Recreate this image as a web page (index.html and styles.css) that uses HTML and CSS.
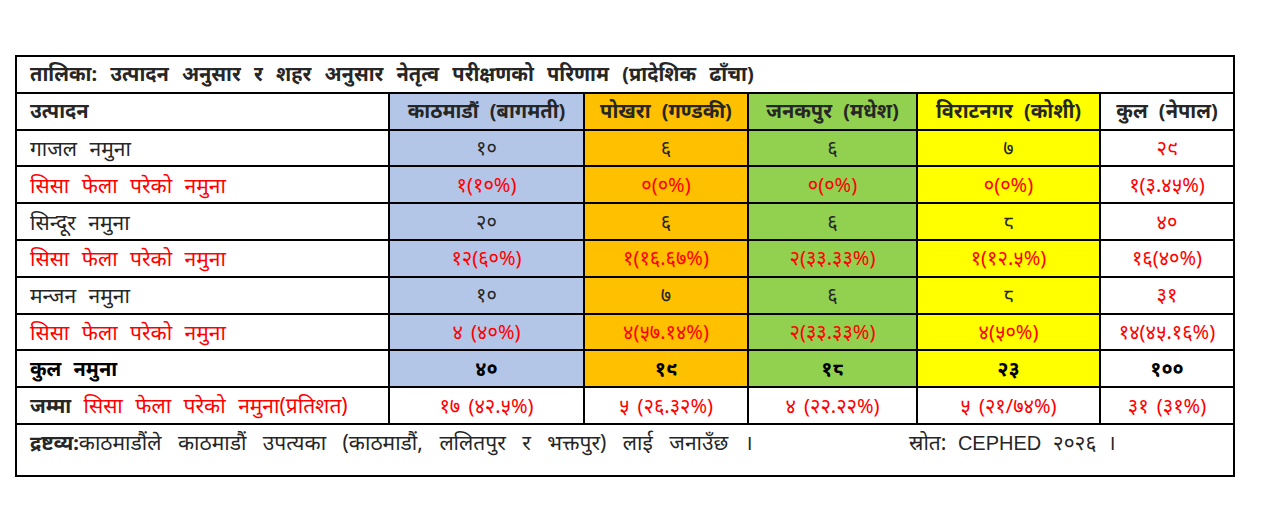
FILE: index.html
```html
<!DOCTYPE html>
<html lang="ne">
<head>
<meta charset="utf-8">
<title>तालिका</title>
<link rel="stylesheet" href="styles.css">
</head>
<body>
<table class="tbl">
  <colgroup>
    <col class="c1"><col class="c2"><col class="c3"><col class="c4"><col class="c5"><col class="c6">
  </colgroup>
  <tr class="title-row"><td colspan="6" class="title">तालिका: उत्पादन अनुसार र शहर अनुसार नेतृत्व परीक्षणको परिणाम (प्रादेशिक ढाँचा)</td></tr>
  <tr class="head">
    <td class="lbl">उत्पादन</td>
    <td class="blue">काठमाडौं (बागमती)</td>
    <td class="orange">पोखरा (गण्डकी)</td>
    <td class="green">जनकपुर (मधेश)</td>
    <td class="yellow">विराटनगर (कोशी)</td>
    <td>कुल (नेपाल)</td>
  </tr>
  <tr class="num">
    <td class="lbl">गाजल नमुना</td>
    <td class="blue">१०</td><td class="orange">६</td><td class="green">६</td><td class="yellow">७</td><td class="red">२९</td>
  </tr>
  <tr class="num red">
    <td class="lbl">सिसा फेला परेको नमुना</td>
    <td class="blue">१(१०%)</td><td class="orange">०(०%)</td><td class="green">०(०%)</td><td class="yellow">०(०%)</td><td>१(३.४५%)</td>
  </tr>
  <tr class="num">
    <td class="lbl">सिन्दूर नमुना</td>
    <td class="blue">२०</td><td class="orange">६</td><td class="green">६</td><td class="yellow">८</td><td class="red">४०</td>
  </tr>
  <tr class="num red">
    <td class="lbl">सिसा फेला परेको नमुना</td>
    <td class="blue">१२(६०%)</td><td class="orange">१(१६.६७%)</td><td class="green">२(३३.३३%)</td><td class="yellow">१(१२.५%)</td><td>१६(४०%)</td>
  </tr>
  <tr class="num">
    <td class="lbl">मन्जन नमुना</td>
    <td class="blue">१०</td><td class="orange">७</td><td class="green">६</td><td class="yellow">८</td><td class="red">३१</td>
  </tr>
  <tr class="num red">
    <td class="lbl">सिसा फेला परेको नमुना</td>
    <td class="blue">४ (४०%)</td><td class="orange">४(५७.१४%)</td><td class="green">२(३३.३३%)</td><td class="yellow">४(५०%)</td><td>१४(४५.१६%)</td>
  </tr>
  <tr class="num total">
    <td class="lbl">कुल नमुना</td>
    <td class="blue">४०</td><td class="orange">१९</td><td class="green">१८</td><td class="yellow">२३</td><td>१००</td>
  </tr>
  <tr class="num red">
    <td class="lbl"><span class="blk">जम्मा</span> सिसा फेला परेको नमुना(प्रतिशत)</td>
    <td>१७ (४२.५%)</td><td>५ (२६.३२%)</td><td>४ (२२.२२%)</td><td>५ (२१/७४%)</td><td>३१ (३१%)</td>
  </tr>
  <tr class="foot-row">
    <td colspan="6" class="foot">
      <div class="foot-line">
        <span class="note"><b>द्रष्टव्य:</b>काठमाडौंले काठमाडौं उपत्यका (काठमाडौं, ललितपुर र भक्तपुर) लाई जनाउँछ ।</span>
        <span class="src">स्रोत: <span class="latin">CEPHED</span> २०२६ ।</span>
      </div>
    </td>
  </tr>
</table>
</body>
</html>
```

FILE: styles.css
```css
html, body {
  margin: 0;
  padding: 0;
  background: #ffffff;
}
body {
  padding: 55px 0 0 15px;
  font-family: "Noto Sans", "Liberation Sans", sans-serif;
  color: #262626;
}
.tbl {
  border-collapse: collapse;
  table-layout: fixed;
  width: 1219px;
  font-size: 20px;
  word-spacing: 6px;
  border: 2px solid #000;
}
.c1 { width: 373px; }
.c2 { width: 195px; }
.c3 { width: 164px; }
.c4 { width: 169px; }
.c5 { width: 183px; }
.c6 { width: 134px; }
.tbl td {
  border: 2px solid #000;
  height: 34.8px;
  padding: 0 2px;
  text-align: center;
  vertical-align: middle;
  white-space: nowrap;
  line-height: 22px;
}
.num td { font-size: 20px; word-spacing: 3px; }
.num td.lbl { font-size: 21px; word-spacing: 7px; }
.total td.lbl { font-size: 20px; }
.tbl td.lbl {
  text-align: left;
  padding-left: 13px;
}
.tbl td.title {
  text-align: left;
  padding-left: 13px;
  font-weight: bold;
  word-spacing: 8px;
}
.head td { font-weight: bold; }
.total td { font-weight: bold; color: #000; }
.blue { background: #b4c6e7; }
.orange { background: #ffc000; }
.green { background: #92d050; }
.yellow { background: #ffff00; }
.red, .red td { color: #ff0000; }
.blk { color: #262626; font-weight: bold; font-size: 20px; }
.tbl td.foot {
  height: 44px;
  text-align: left;
  vertical-align: top;
  padding: 6px 0 0 13px;
  font-size: 21px;
  word-spacing: 11px;
}
.foot-line {
  display: flex;
}
.note { flex: 0 0 879px; }
.note b { font-size: 20px; word-spacing: 0; }
.src { word-spacing: 6px; }
.latin { font-family: "Liberation Sans", Arial, sans-serif; font-size: 20px; word-spacing: 0; }
```
